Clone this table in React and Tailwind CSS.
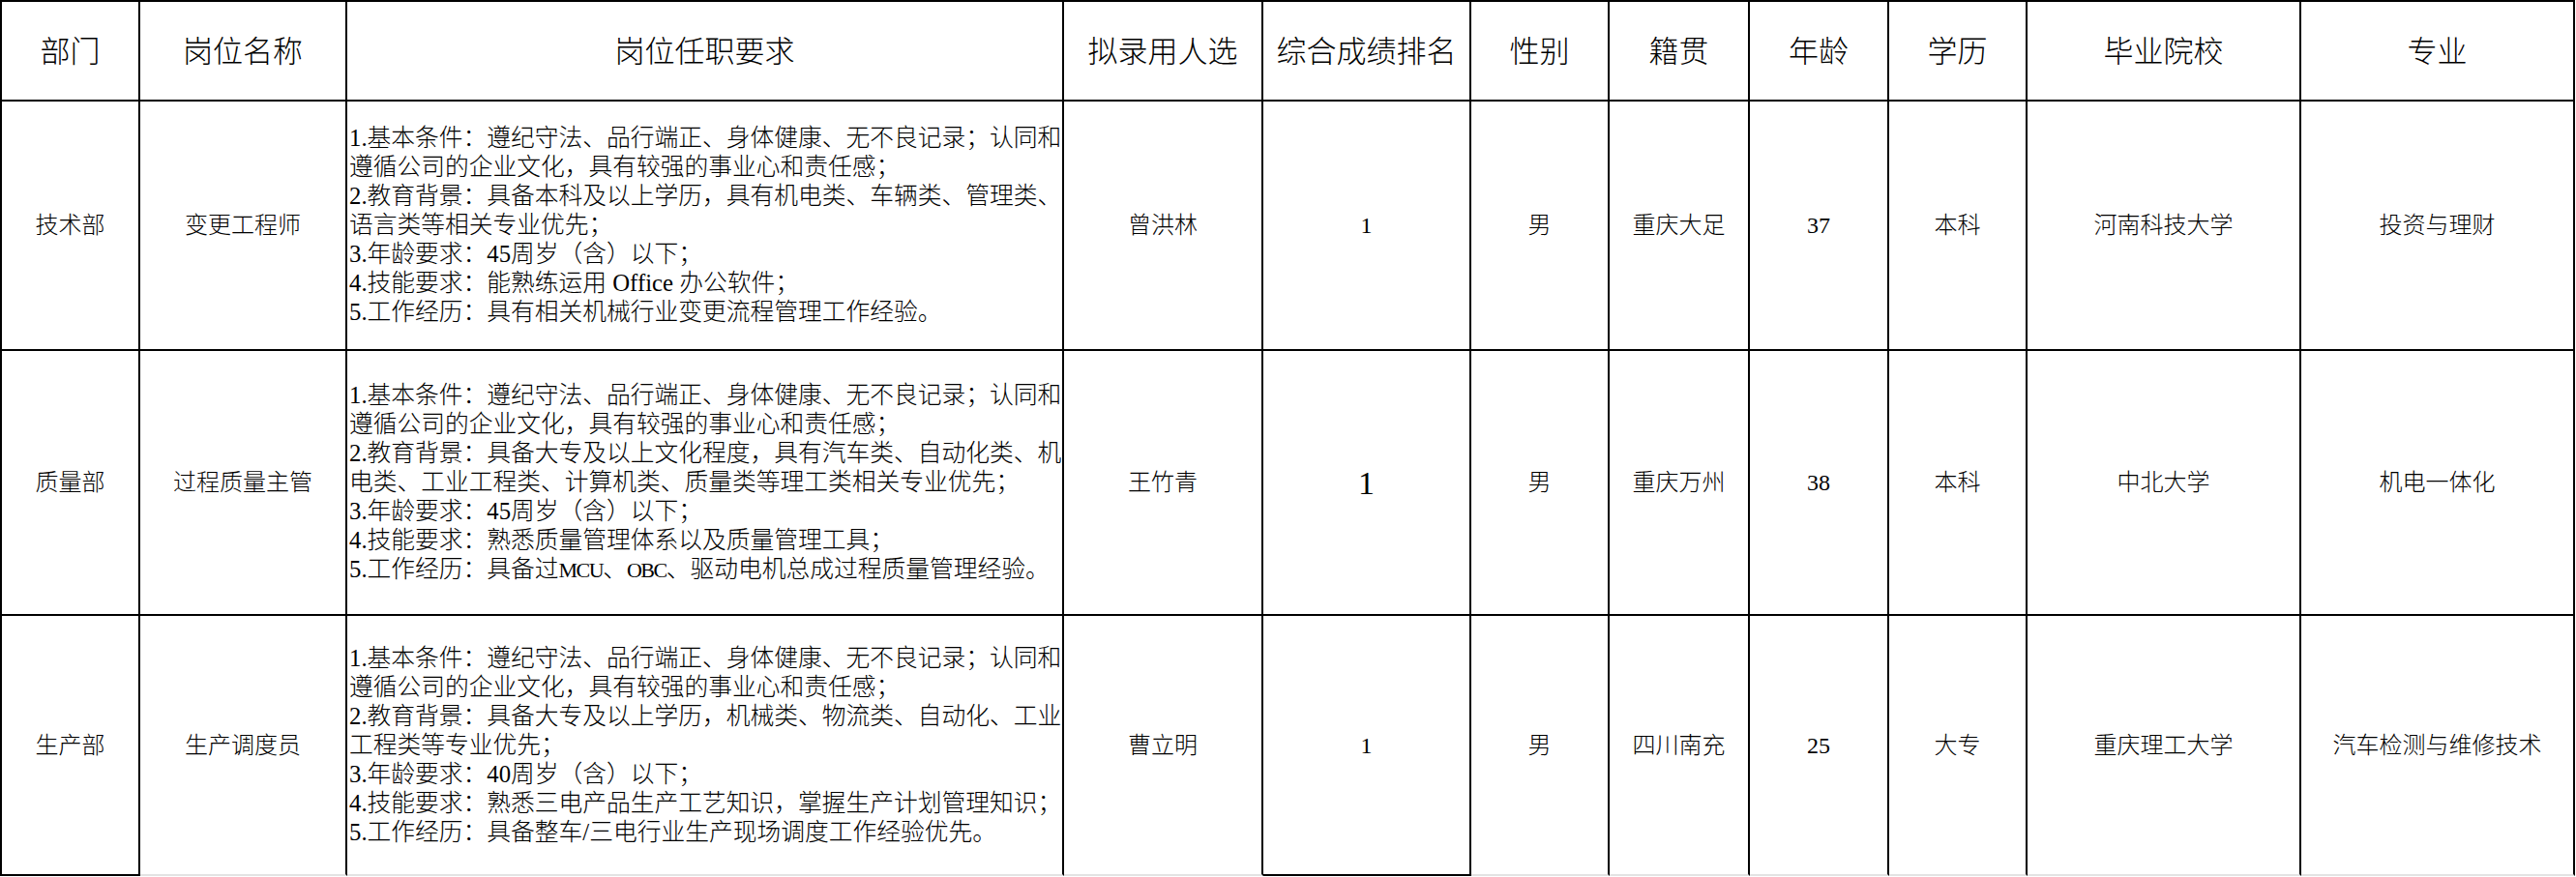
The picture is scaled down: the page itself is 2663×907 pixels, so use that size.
import React from 'react';

const headers = ['部门', '岗位名称', '岗位任职要求', '拟录用人选', '综合成绩排名', '性别', '籍贯', '年龄', '学历', '毕业院校', '专业'];

const rows = [
  {
    dept: '技术部',
    title: '变更工程师',
    req: [
      '1.基本条件：遵纪守法、品行端正、身体健康、无不良记录；认同和',
      '遵循公司的企业文化，具有较强的事业心和责任感；',
      '2.教育背景：具备本科及以上学历，具有机电类、车辆类、管理类、',
      '语言类等相关专业优先；',
      '3.年龄要求：45周岁（含）以下；',
      '4.技能要求：能熟练运用 Office 办公软件；',
      '5.工作经历：具有相关机械行业变更流程管理工作经验。',
    ],
    name: '曾洪林',
    rank: '1',
    big: false,
    sex: '男',
    origin: '重庆大足',
    age: '37',
    edu: '本科',
    school: '河南科技大学',
    major: '投资与理财',
  },
  {
    dept: '质量部',
    title: '过程质量主管',
    req: [
      '1.基本条件：遵纪守法、品行端正、身体健康、无不良记录；认同和',
      '遵循公司的企业文化，具有较强的事业心和责任感；',
      '2.教育背景：具备大专及以上文化程度，具有汽车类、自动化类、机',
      '电类、工业工程类、计算机类、质量类等理工类相关专业优先；',
      '3.年龄要求：45周岁（含）以下；',
      '4.技能要求：熟悉质量管理体系以及质量管理工具；',
      <>
        5.工作经历：具备过<span className="text-[22px] tracking-[-1.5px]">MCU</span>、<span className="text-[22px] tracking-[-1.5px]">OBC</span>、驱动电机总成过程质量管理经验。
      </>,
    ],
    name: '王竹青',
    rank: '1',
    big: true,
    sex: '男',
    origin: '重庆万州',
    age: '38',
    edu: '本科',
    school: '中北大学',
    major: '机电一体化',
  },
  {
    dept: '生产部',
    title: '生产调度员',
    req: [
      '1.基本条件：遵纪守法、品行端正、身体健康、无不良记录；认同和',
      '遵循公司的企业文化，具有较强的事业心和责任感；',
      '2.教育背景：具备大专及以上学历，机械类、物流类、自动化、工业',
      '工程类等专业优先；',
      '3.年龄要求：40周岁（含）以下；',
      '4.技能要求：熟悉三电产品生产工艺知识，掌握生产计划管理知识；',
      '5.工作经历：具备整车/三电行业生产现场调度工作经验优先。',
    ],
    name: '曹立明',
    rank: '1',
    big: false,
    sex: '男',
    origin: '四川南充',
    age: '25',
    edu: '大专',
    school: '重庆理工大学',
    major: '汽车检测与维修技术',
  },
];

const font = { fontFamily: '"Liberation Serif", "Noto Sans CJK SC", serif' };

function Cell({ children, first, top, last, dark, className = '' }) {
  let cls = 'flex items-center justify-center border-r-2 border-black overflow-hidden ';
  if (first) cls += 'border-l-2 ';
  if (top) cls += 'border-t-2 ';
  if (last) cls += dark ? 'border-b-2 border-b-black ' : 'border-b-2 border-b-[#e3e3e3] ';
  else cls += 'border-b-2 ';
  return <div className={cls + className}>{children}</div>;
}

export default function App() {
  return (
    <div className="w-[2663px] h-[907px] bg-white text-black font-light overflow-hidden" style={font}>
      <div className="grid grid-cols-[145px_214px_741px_206px_215px_143px_145px_144px_143px_283px_283px] grid-rows-[105px_258px_274px_269px]">
        {headers.map((h, i) => (
          <Cell key={h} top first={i === 0} className="text-[31px] pt-[4px]">
            {h}
          </Cell>
        ))}
        {rows.map((r, ri) => {
          const last = ri === rows.length - 1;
          return (
            <React.Fragment key={r.dept}>
              <Cell first last={last} dark className="text-[24px]">{r.dept}</Cell>
              <Cell last={last} className="text-[24px]">{r.title}</Cell>
              <Cell last={last} className="!justify-start pl-[2px] text-[24.75px] leading-[30px]">
                <div>
                  {r.req.map((line, li) => (
                    <div key={li} className="whitespace-pre">{line}</div>
                  ))}
                </div>
              </Cell>
              <Cell last={last} className="text-[24px]">{r.name}</Cell>
              <Cell last={last} dark className={r.big ? 'text-[34px]' : 'text-[24px]'}>{r.rank}</Cell>
              <Cell last={last} className="text-[24px]">{r.sex}</Cell>
              <Cell last={last} className="text-[24px]">{r.origin}</Cell>
              <Cell last={last} className="text-[24px]">{r.age}</Cell>
              <Cell last={last} className="text-[24px]">{r.edu}</Cell>
              <Cell last={last} className="text-[24px]">{r.school}</Cell>
              <Cell last={last} className="text-[24px]">{r.major}</Cell>
            </React.Fragment>
          );
        })}
      </div>
    </div>
  );
}
